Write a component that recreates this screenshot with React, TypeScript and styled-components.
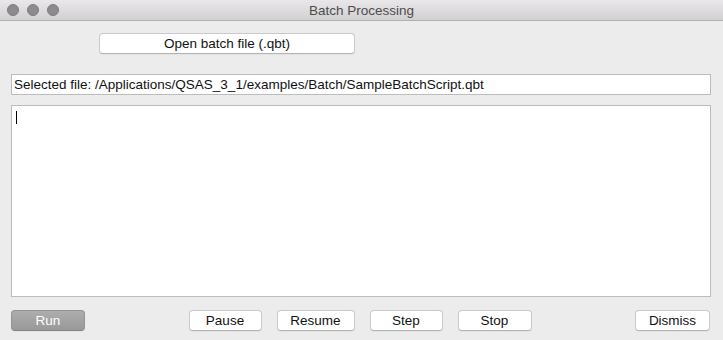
import React from "react";
import styled, { createGlobalStyle } from "styled-components";

const Global = createGlobalStyle`
  html, body { margin: 0; padding: 0; background: #ececec; }
  body { font-family: "Liberation Sans", Arial, sans-serif; }
`;

const Window = styled.div`
  width: 723px;
  height: 340px;
  display: flex;
  flex-direction: column;
  background: #ececec;
  overflow: hidden;
`;

const TitleBar = styled.div`
  height: 20px;
  flex: 0 0 20px;
  display: flex;
  align-items: center;
  position: relative;
  background: linear-gradient(#e9e7e9, #d2d0d2);
  border-bottom: 1px solid #b1afb1;
`;

const Lights = styled.div`
  display: flex;
  gap: 8px;
  padding-left: 7px;
`;

const Light = styled.span`
  width: 12px;
  height: 12px;
  border-radius: 50%;
  background: #8c8b8d;
  box-sizing: border-box;
  border: 1px solid #7d7c7e;
`;

const Title = styled.div`
  position: absolute;
  left: 0;
  right: 0;
  text-align: center;
  font-size: 13.5px;
  color: #4c4c4c;
  pointer-events: none;
`;

const Content = styled.div`
  flex: 1;
  display: flex;
  flex-direction: column;
  padding: 12px 12px 0 11px;
`;

const OpenRow = styled.div`
  display: flex;
  padding-left: 88px;
`;

const Button = styled.button<{ $w: number; $disabled?: boolean }>`
  width: ${(p) => p.$w}px;
  height: 21px;
  box-sizing: border-box;
  padding: 0;
  margin: 0;
  border-radius: 4px;
  font-family: "Liberation Sans", Arial, sans-serif;
  font-size: 13.5px;
  line-height: 19px;
  color: ${(p) => (p.$disabled ? "#ffffff" : "#111")};
  background: ${(p) =>
    p.$disabled ? "linear-gradient(#adadad, #999999)" : "#ffffff"};
  border: 1px solid ${(p) => (p.$disabled ? "#939393" : "#c9c9c9")};
  border-bottom-color: ${(p) => (p.$disabled ? "#858585" : "#b4b4b4")};
  box-shadow: 0 0.5px 0.5px rgba(0, 0, 0, 0.08);
`;

const FileField = styled.div`
  margin-top: 20px;
  height: 21px;
  box-sizing: border-box;
  background: #fff;
  border: 1px solid #bcbcbc;
  font-size: 13.5px;
  line-height: 19px;
  padding-left: 2px;
  color: #111;
  white-space: nowrap;
`;

const Log = styled.div`
  margin-top: 10px;
  height: 192px;
  box-sizing: border-box;
  background: #fff;
  border: 1px solid #bcbcbc;
  padding: 5px 0 0 4px;
`;

const Caret = styled.span`
  display: block;
  width: 1px;
  height: 13px;
  background: #000;
`;

const BottomRow = styled.div`
  margin-top: 13px;
  padding-right: 1px;
  display: flex;
  align-items: center;
`;

const Spacer = styled.div`
  flex: 1;
`;

const Group = styled.div`
  display: flex;
  gap: 15px;
`;

export default function App() {
  return (
    <>
      <Global />
      <Window>
        <TitleBar>
          <Lights>
            <Light />
            <Light />
            <Light />
          </Lights>
          <Title>Batch Processing</Title>
        </TitleBar>
        <Content>
          <OpenRow>
            <Button $w={256}>Open batch file (.qbt)</Button>
          </OpenRow>
          <FileField>
            Selected file: /Applications/QSAS_3_1/examples/Batch/SampleBatchScript.qbt
          </FileField>
          <Log>
            <Caret />
          </Log>
          <BottomRow>
            <Button $w={74} $disabled>
              Run
            </Button>
            <Spacer />
            <Group>
              <Button $w={73}>Pause</Button>
              <Button $w={78}>Resume</Button>
              <Button $w={73}>Step</Button>
              <Button $w={74}>Stop</Button>
            </Group>
            <Spacer />
            <Button $w={75}>Dismiss</Button>
          </BottomRow>
        </Content>
      </Window>
    </>
  );
}
